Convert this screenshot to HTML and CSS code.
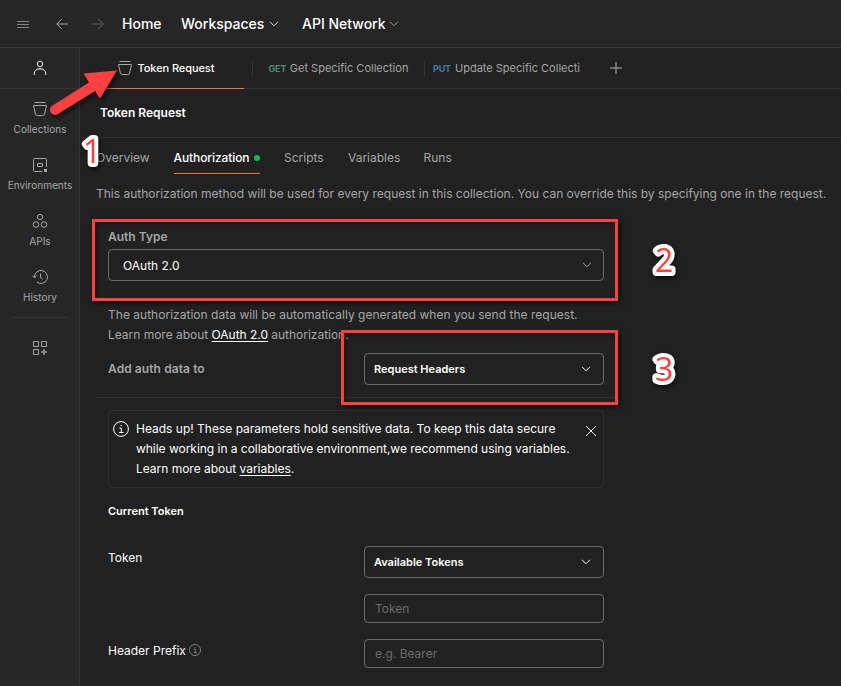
FILE: index.html
```html
<!DOCTYPE html>
<html lang="en">
<head>
<meta charset="utf-8">
<title>Token Request</title>
<link rel="stylesheet" href="styles.css">
</head>
<body>
<div class="app">
  <header class="topbar">
    <svg class="menu" width="12" height="9" viewBox="0 0 12 9"><path d="M0 1.500h12M0 4.500h12M0 7.500h12"/></svg>
    <svg class="back" width="12" height="12" viewBox="0 0 12 12"><path d="M12 6H.8M5.800 1L.8 6l5 5"/></svg>
    <svg class="forward" width="12" height="12" viewBox="0 0 12 12"><path d="M0 6h11.200M6.200 1l5 5-5 5"/></svg>
    <span class="nav home">Home</span>
    <span class="nav workspaces">Workspaces</span>
    <svg class="chev bright" width="10" height="6" viewBox="0 0 10 6"><path d="M1 .8l4 4 4-4"/></svg>
    <span class="nav network">API Network</span>
    <svg class="chev dim" width="10" height="6" viewBox="0 0 10 6"><path d="M1 .8l4 4 4-4"/></svg>
  </header>
  <div class="body">
    <aside class="sidebar">
      <div class="user"><svg width="14" height="16" viewBox="0 0 14 16"><circle cx="7" cy="4" r="2.700"/><path d="M1.300 15v-1.500C1.300 10.500 3.700 8.800 7 8.800s5.700 1.700 5.700 4.700V15"/></svg></div>
      <div class="item"><svg width="16" height="16" viewBox="0 0 16 16"><path d="M2.500 1.500h11M1.500 4.500h13l-1.900 8.600q-.3 1.400-1.700 1.400H5.100q-1.400 0-1.700-1.400z"/></svg><span>Collections</span></div>
      <div class="item"><svg width="16" height="16" viewBox="0 0 16 16"><path d="M10 14.500H2.500q-1 0-1-1v-11q0-1 1-1h11q1 0 1 1V10M5.500 6.500h5v3h-5z"/><path class="fill" d="M12 12h3v3h-3z"/></svg><span>Environments</span></div>
      <div class="item"><svg width="16" height="16" viewBox="0 0 16 16"><circle cx="8" cy="4" r="2.600"/><circle cx="4" cy="11.500" r="2.800"/><circle cx="12" cy="11.500" r="2.800"/></svg><span>APIs</span></div>
      <div class="item"><svg width="16" height="16" viewBox="0 0 16 16"><path d="M2.500 8.500A6.500 6.500 0 1 1 5 13.100M.5 6.700l2 2 2.200-2M8.500 4.500v4.200l2.200 1.200"/></svg><span>History</span></div>
      <hr>
      <div class="more"><svg width="16" height="16" viewBox="0 0 16 16"><path d="M1.500 1.500h5v5h-5zM9.500 1.500h5v5h-5zM1.500 9.500h5v5h-5z"/><path class="plus" d="M12 9.300v5.400M9.300 12h5.400"/></svg></div>
    </aside>
    <main>
      <div class="tabs">
        <div class="tab active"><svg width="16" height="16" viewBox="0 0 16 16"><path d="M2.500 1.500h11M1.500 4.500h13l-1.900 8.600q-.3 1.400-1.700 1.400H5.100q-1.400 0-1.700-1.400z"/></svg><span>Token Request</span></div>
        <div class="tab second"><b class="get">GET</b><span>Get Specific Collection</span></div>
        <div class="tab third"><b class="put">PUT</b><span>Update Specific Collecti</span></div>
        <svg class="add" width="12" height="12" viewBox="0 0 12 12"><path d="M6 0v12M0 6h12"/></svg>
      </div>
      <div class="title"><span>Token Request</span></div>
      <nav class="subtabs">
        <span>Overview</span>
        <span class="current"><span>Authorization</span><i></i></span>
        <span class="scripts">Scripts</span>
        <span class="variables">Variables</span>
        <span>Runs</span>
      </nav>
      <p class="intro"><span>This authorization method will be used for every request in this collection. You can override this by specifying one in the request.</span></p>
      <section class="auth">
        <div class="label"><span>Auth Type</span></div>
        <div class="field type"><span>OAuth 2.0</span><svg width="10" height="6" viewBox="0 0 10 6"><path d="M1 .8l4 4 4-4"/></svg></div>
        <p class="help"><span>The authorization data will be automatically generated when you send the request.</span><br><span class="learn">Learn more about <u>OAuth 2.0</u> authorization.</span></p>
        <div class="row add-row"><span class="add-label">Add auth data to</span>
          <div class="field select"><span>Request Headers</span><svg width="10" height="6" viewBox="0 0 10 6"><path d="M1 .8l4 4 4-4"/></svg></div>
        </div>
      </section>
      <hr>
      <section class="details">
        <div class="notice">
          <svg class="info" width="16" height="16" viewBox="0 0 16 16"><circle cx="8" cy="8" r="7.400"/><path d="M6.300 7H8.300v4.500M6 11.500h4.500M7.500 4.500h1.300"/></svg>
          <p><span>Heads up! These parameters hold sensitive data. To keep this data secure</span><br><span class="tight">while working in a collaborative environment,we recommend using variables.</span><br><span class="learn">Learn more about <u>variables</u>.</span></p>
          <svg class="close" width="12" height="12" viewBox="0 0 12 12"><path d="M1 1l10 10M11 1L1 11"/></svg>
        </div>
        <h2><span>Current Token</span></h2>
        <div class="row token-row"><span class="name">Token</span>
          <div class="stack">
            <div class="field select"><span>Available Tokens</span><svg width="10" height="6" viewBox="0 0 10 6"><path d="M1 .8l4 4 4-4"/></svg></div>
            <div class="field input"><span>Token</span></div>
          </div>
        </div>
        <div class="row prefix-row"><span class="name"><span>Header Prefix</span><svg width="12" height="12" viewBox="0 0 16 16"><circle cx="8" cy="8" r="7.400"/><path d="M6.300 7H8.300v4.500M6 11.500h4.500M7.500 4.500h1.300"/></svg></span>
          <div class="field input"><span>e.g. Bearer</span></div>
        </div>
      </section>
    </main>
  </div>
  <div class="marker box-a"></div>
  <div class="marker box-b"></div>
  <svg class="arrow" width="90" height="60" viewBox="0 0 90 60"><path d="M8.500 44.500L45 21.500L39.500 12.500L73 9.500L56 37.500L51 30L13.500 53.200A5 5 0 0 1 8.500 44.500z"/></svg>
  <svg class="num one" width="40" height="44" viewBox="0 0 40 44"><text x="9" y="33">1</text></svg>
  <svg class="num two" width="40" height="44" viewBox="0 0 40 44"><text x="9" y="33">2</text></svg>
  <svg class="num three" width="40" height="44" viewBox="0 0 40 44"><text x="9" y="33">3</text></svg>
</div>
</body>
</html>
```
FILE: styles.css
```css
* { box-sizing: border-box; }
body { margin: 0; background: #212121; font-family: Inter, sans-serif; font-size: 12px; color: #fff; }
svg { display: block; flex: none; fill: none; stroke: currentColor; }
p, h2, hr { margin: 0; }
span { white-space: nowrap; }
.app { position: relative; width: 841px; height: 686px; overflow: hidden; display: flex; flex-direction: column; }
.topbar { height: 48px; flex: none; background: #262626; border-bottom: 1px solid #3b3b3b; display: flex; align-items: center; padding-left: 17px; font-size: 14px; }
.nav { font-weight: 450; }
.menu { color: #858585; margin: 2px 27px 0 0; }
.back { color: #a6a6a6; margin-right: 24px; }
.forward { color: #606060; margin-right: 18px; }
.home { width: 59px; }
.workspaces { width: 88px; }
.bright { color: #ddd; margin-right: 23px; }
.network { width: 87px; }
.dim { color: #999; }
.body { display: flex; flex: 1; min-height: 0; }
.sidebar { width: 80px; flex: none; background: #262626; border-right: 1px solid #333; color: #a6a6a6; font-size: 10px; letter-spacing: .03px; }
.user { height: 41px; border-bottom: 1px solid #333; display: flex; justify-content: center; align-items: center; color: #fff; }
.item { height: 56px; padding: 12px 0 0 1px; display: flex; flex-direction: column; align-items: center; gap: 4px; line-height: 16px; }
.fill { fill: currentColor; stroke: none; }
.sidebar hr { border: 0; border-top: 1px solid #333; margin: 4px 11px 0 12px; }
.more { padding: 22px 0 0 32px; }
.plus { stroke-width: 2; stroke: #888; }
main { flex: 1; min-width: 0; background: #212121; color: #a6a6a6; }
.tabs { height: 41px; border-bottom: 1px solid #333; display: flex; align-items: center; font-size: 11px; }
.tab { display: flex; align-items: center; height: 17px; }
.active { width: 152px; height: 41px; margin-left: 12px; padding-left: 25px; color: #fff; gap: 4.500px; border-bottom: 1px solid #ff6c37; font-weight: 500; letter-spacing: -.08px; }
.active svg { color: #a6a6a6; }
.second { margin-left: 8px; width: 172px; padding-left: 15.500px; border-left: 1px solid #333; gap: 3.500px; }
.third { width: 186px; padding-left: 8px; border-left: 1px solid #333; gap: 4px; }
.tab b { font-size: 9px; font-weight: 700; letter-spacing: -.15px; }
.get { color: #498a66; }
.put { color: #4d74a8; }
.add { color: #888; stroke-width: 1.500; }
.title { height: 49px; border-bottom: 1px solid #303030; padding-left: 20px; line-height: 48px; color: #fff; font-weight: 600; font-size: 12px; }
.subtabs { display: flex; padding-left: 16px; height: 36px; line-height: 40px; }
.subtabs > :first-child { width: 77.500px; }
.current { display: flex; align-items: flex-start; justify-content: space-between; width: 86.500px; margin-right: 24px; color: #fff; border-bottom: 1px solid #ff6c37; font-weight: 500; letter-spacing: -.1px; }
.current i { width: 6px; height: 6px; border-radius: 50%; background: #0cbb52; margin-top: 17px; }
.scripts { width: 64px; }
.variables { width: 75.500px; }
.intro { padding-left: 16px; line-height: 20px; margin-top: 10px; }
.auth { padding-left: 28px; }
.label { line-height: 20px; margin-top: 23px; font-weight: 600; font-size: 12px; }
.field { border: 1px solid #6b6b6b; border-radius: 4px; display: flex; align-items: center; justify-content: space-between; height: 32px; width: 240px; color: #fff; padding: 0 12px 0 9px; }
.type { width: 496px; margin-top: 2px; padding: 0 11px 0 14px; }
.type svg { color: #a6a6a6; }
.help { line-height: 20px; margin-top: 24px; letter-spacing: .02px; }
.learn { letter-spacing: -.02px; }
u { text-underline-offset: 2px; }
.help u { color: #fff; }
.row { display: flex; justify-content: space-between; width: 496px; }
.add-row { margin-top: 8px; }
.add-label { font-weight: 600; font-size: 12px; line-height: 32px; letter-spacing: .08px; }
.select { font-weight: 600; font-size: 11px; }
main > hr { border: 0; border-top: 1px solid #303030; margin: 12px 223px 0 16px; }
.details { padding: 12px 0 0 28px; color: #fff; }
.notice { width: 496px; height: 78px; border: 1px solid #303030; border-radius: 4px; display: flex; padding: 8px 6px 0 4px; line-height: 20px; }
.notice p { margin-left: 7px; flex: 1; }
.tight { letter-spacing: -.03px; }
.info { margin-top: 2px; }
.close { margin-top: 6px; }
h2 { font-size: 11px; font-weight: 600; line-height: 20px; margin-top: 13px; }
.token-row { margin-top: 25px; }
.name { line-height: 24px; display: flex; gap: 3px; }
.name svg { margin-top: 5px; color: #999; }
.stack { display: flex; flex-direction: column; gap: 16px; }
.input { height: 29px; color: #6b6b6b; padding-left: 10px; }
.prefix-row { margin-top: 16px; }
.marker { position: absolute; border: 3px solid #ff4040; box-shadow: 2px 2px 5px rgba(0,0,0,.6), inset 2px 2px 5px rgba(0,0,0,.4); }
.box-a { left: 92px; top: 219px; width: 526px; height: 82px; }
.box-b { left: 341px; top: 330px; width: 277px; height: 75px; }
.arrow { position: absolute; left: 44px; top: 61px; fill: #ff4040; stroke: none; filter: drop-shadow(2px 3px 2px rgba(0,0,0,.6)); }
.num { position: absolute; filter: drop-shadow(1px 2px 2px rgba(0,0,0,.7)); }
.num text { font: 32px "Open Sans", sans-serif; fill: #ff4040; stroke: #fff; stroke-width: 8px; stroke-linejoin: round; paint-order: stroke fill; }
.one { left: 74px; top: 130px; }
.two { left: 646px; top: 239px; }
.three { left: 646px; top: 348px; }
```
